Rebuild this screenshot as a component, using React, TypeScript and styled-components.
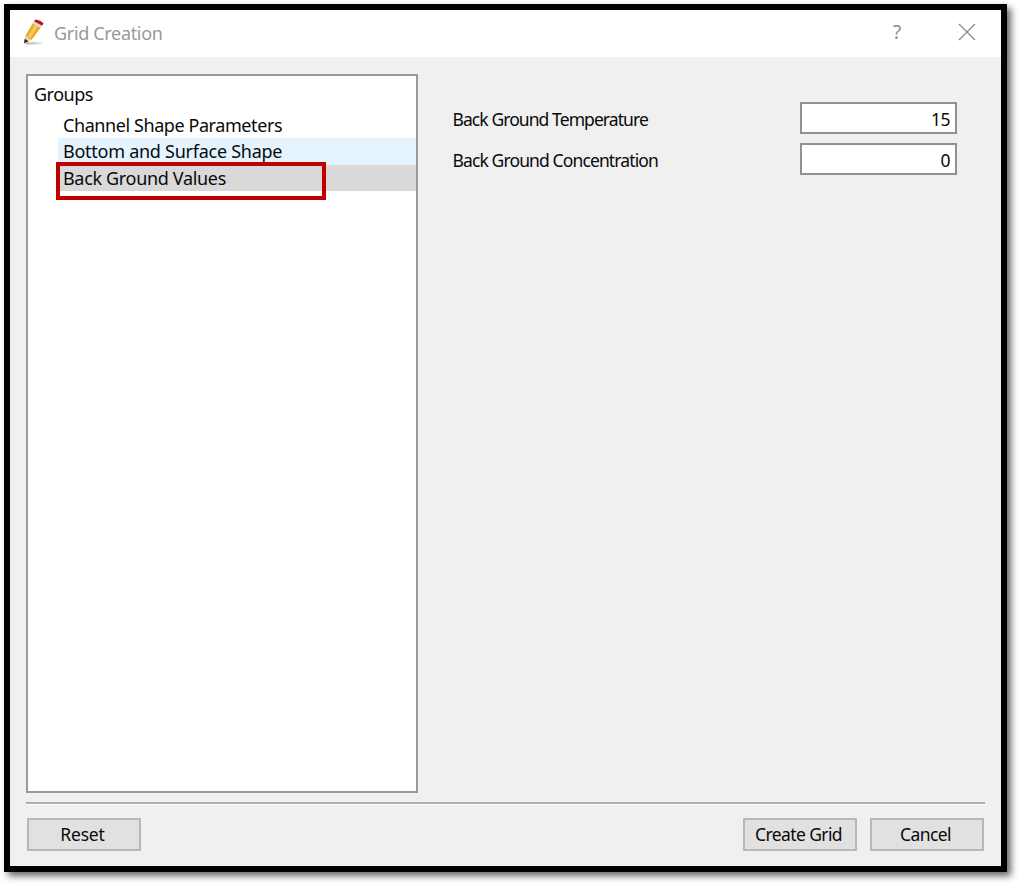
import React from "react";
import styled, { createGlobalStyle } from "styled-components";

const GlobalStyle = createGlobalStyle`
  * { box-sizing: border-box; }
  body { margin: 0; background: #fff; overflow: hidden; }
`;

const Page = styled.div`
  width: 1020px;
  height: 885px;
  padding: 4px 13px 13px 4px;
  font-family: "Noto Sans", "Open Sans", sans-serif;
  font-size: 18px;
  color: #0a0a0a;
`;

const Dialog = styled.main`
  display: flex;
  flex-direction: column;
  width: 1003px;
  height: 868px;
  border: 6px solid #000;
  background: #f0f0f0;
  box-shadow: 4px 4px 7px rgba(0, 0, 0, 0.6);
`;

const TitleBar = styled.header`
  display: flex;
  align-items: center;
  height: 47px;
  padding: 0 24px 3px 12px;
  background: #fff;
  color: #999;
`;

const Title = styled.h1`
  flex: 1;
  margin: 0 0 0 8px;
  padding-top: 2px;
  font-size: 18px;
  line-height: 24px;
  font-weight: 400;
  letter-spacing: -0.33px;
`;

const TitleButton = styled.button<{ $gap?: number }>`
  display: flex;
  align-items: center;
  justify-content: center;
  width: 20px;
  height: 24px;
  margin: 0 ${(p) => p.$gap ?? 0}px 0 0;
  padding: 0;
  border: 0;
  background: none;
  color: #8c8c8c;
  font: 19px "Noto Sans", sans-serif;
`;

const Body = styled.div`
  display: flex;
  height: 736px;
  padding: 17px 16px 0;
`;

const Tree = styled.nav`
  width: 392px;
  height: 719px;
  padding: 5px 0 0;
  border: 2px solid #969aa4;
  background: #fff;
`;

const TreeRoot = styled.div`
  height: 31px;
  padding-left: 6px;
  line-height: 27px;
  letter-spacing: -0.5px;
`;

const TreeList = styled.ul`
  position: relative;
  margin: 0 0 0 30px;
  padding: 0;
  list-style: none;
`;

const TreeItem = styled.li<{ $bg?: string; $spacing: number; $height?: number }>`
  height: ${(p) => p.$height ?? 26}px;
  padding-left: 5px;
  line-height: 27px;
  white-space: nowrap;
  background: ${(p) => p.$bg ?? "transparent"};
  letter-spacing: ${(p) => p.$spacing}px;
`;

const Highlight = styled.div`
  position: absolute;
  left: -2px;
  top: 50px;
  width: 270px;
  height: 38px;
  border: 4px solid #c00000;
`;

const Form = styled.section`
  flex: 1;
  display: flex;
  flex-direction: column;
  gap: 9px;
  padding: 28px 28px 0 34px;
`;

const Field = styled.label`
  display: flex;
  align-items: center;
  justify-content: space-between;
  height: 32px;
`;

const Label = styled.span<{ $spacing: number }>`
  font-size: 17.5px;
  line-height: 24px;
  padding: 2px 0 0 0.5px;
  letter-spacing: ${(p) => p.$spacing}px;
`;

const Input = styled.input`
  width: 157px;
  height: 32px;
  padding: 1px 5px 0 0;
  border: 2px solid #919191;
  outline: 0;
  background: #fff;
  color: #0a0a0a;
  text-align: right;
  font: 17.5px "Noto Sans", sans-serif;
  letter-spacing: -0.5px;
`;

const Footer = styled.footer`
  display: flex;
  gap: 13px;
  margin: 9px 16px 0;
  padding: 14px 1px 0;
  border-top: 2px solid #adadad;
  box-shadow: inset 0 1px #fff;
`;

const Button = styled.button<{ $push?: boolean; $spacing: number }>`
  width: 114px;
  height: 33px;
  margin-right: ${(p) => (p.$push ? "auto" : "0")};
  padding: 0 3px 1px 0;
  border: 2px solid #b8b8b8;
  background: #e1e1e1;
  color: #0a0a0a;
  white-space: nowrap;
  font: 17.5px "Noto Sans", sans-serif;
  letter-spacing: ${(p) => p.$spacing}px;
`;

const PencilIcon = () => (
  <svg width="24" height="28" viewBox="0 0 24 28">
    <defs>
      <linearGradient id="ground">
        <stop offset="0" stopColor="#aaa" />
        <stop offset="1" stopColor="#eee" />
      </linearGradient>
    </defs>
    <ellipse cx="12" cy="25.3" rx="10" ry="1.3" fill="url(#ground)" />
    <path d="M2 25 3.4 17.5 9.4 21.8Z" fill="#e9d3ae" />
    <path d="M2 25 2.8 20.8 6.6 23.4Z" fill="#222" />
    <path d="M3.4 17.8 10.8 5 18.8 9.6 9.6 22Z" fill="#e8ae2c" />
    <path d="M5.8 18.8 13 6.4 15.8 8 8 20.3Z" fill="#f6cf60" />
    <path d="m10.8 5 1.2-1.8 8 4.6-1.2 1.8Z" fill="#ddd" />
    <path d="M12 3.2 13.6 1.5Q18.6 2 21.6 5.2L20 7.8Z" fill="#b41620" />
  </svg>
);

const CloseIcon = () => (
  <svg width="18" height="18" viewBox="0 0 18 18" style={{ flexShrink: 0 }}>
    <path d="m1 1 16 16M17 1 1 17" stroke="#8c8c8c" strokeWidth="1.3" />
  </svg>
);

export default function App() {
  return (
    <Page>
      <GlobalStyle />
      <Dialog>
        <TitleBar>
          <PencilIcon />
          <Title>Grid Creation</Title>
          <TitleButton $gap={50}>?</TitleButton>
          <TitleButton aria-label="Close"><CloseIcon /></TitleButton>
        </TitleBar>
        <Body>
          <Tree>
            <TreeRoot>Groups</TreeRoot>
            <TreeList>
              <TreeItem $spacing={-0.42}>Channel Shape Parameters</TreeItem>
              <TreeItem $spacing={-0.26} $height={27} $bg="#e5f3ff">Bottom and Surface Shape</TreeItem>
              <TreeItem $spacing={-0.33} $bg="#d9d9d9">Back Ground Values</TreeItem>
              <Highlight />
            </TreeList>
          </Tree>
          <Form>
            <Field>
              <Label $spacing={-0.92}>Back Ground Temperature</Label>
              <Input defaultValue="15" />
            </Field>
            <Field>
              <Label $spacing={-0.88}>Back Ground Concentration</Label>
              <Input defaultValue="0" />
            </Field>
          </Form>
        </Body>
        <Footer>
          <Button $push $spacing={-0.2}>Reset</Button>
          <Button $spacing={-0.6}>Create Grid</Button>
          <Button $spacing={-0.6}>Cancel</Button>
        </Footer>
      </Dialog>
    </Page>
  );
}
